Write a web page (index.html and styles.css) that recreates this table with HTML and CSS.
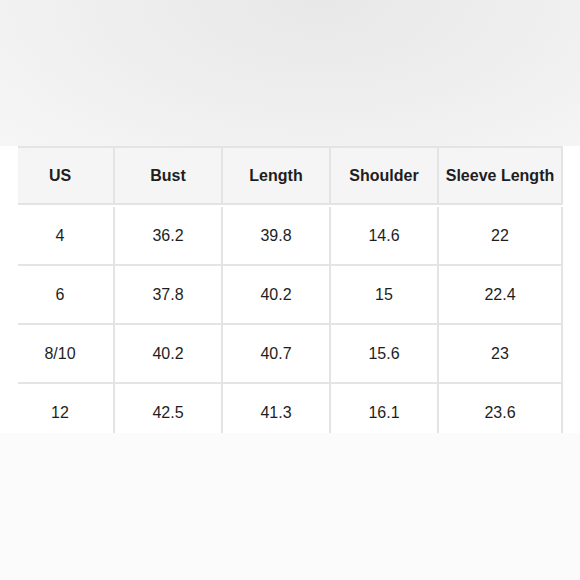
FILE: index.html
```html
<!DOCTYPE html>
<html>
<head>
<meta charset="utf-8">
<link rel="stylesheet" href="styles.css">
</head>
<body>
<div class="page">
  <div class="top"></div>
  <div class="band">
    <div class="clip">
      <div class="grid">
        <div class="cell head">US</div>
        <div class="cell head">Bust</div>
        <div class="cell head">Length</div>
        <div class="cell head">Shoulder</div>
        <div class="cell head">Sleeve Length</div>

        <div class="cell">4</div>
        <div class="cell">36.2</div>
        <div class="cell">39.8</div>
        <div class="cell">14.6</div>
        <div class="cell">22</div>

        <div class="cell">6</div>
        <div class="cell">37.8</div>
        <div class="cell">40.2</div>
        <div class="cell">15</div>
        <div class="cell">22.4</div>

        <div class="cell">8/10</div>
        <div class="cell">40.2</div>
        <div class="cell">40.7</div>
        <div class="cell">15.6</div>
        <div class="cell">23</div>

        <div class="cell">12</div>
        <div class="cell">42.5</div>
        <div class="cell">41.3</div>
        <div class="cell">16.1</div>
        <div class="cell">23.6</div>
      </div>
    </div>
  </div>
  <div class="bottom"></div>
</div>
</body>
</html>
```
FILE: styles.css
```css
html, body {
  margin: 0;
  padding: 0;
  background: #fbfbfb;
}
.page {
  width: 580px;
  height: 580px;
  display: flex;
  flex-direction: column;
  font-family: "Liberation Sans", Arial, sans-serif;
  color: #1e1e1e;
}
.top {
  height: 146px;
  background: radial-gradient(ellipse 460px 230px at 55% 0%, #e8e8e8 0%, #eeeeee 45%, #f7f7f7 100%);
}
.band {
  height: 287px;
  background: #ffffff;
  padding-left: 18px;
}
.clip {
  width: 545px;
  height: 287px;
  overflow: hidden;
}
.grid {
  margin-left: -11px;
  display: grid;
  grid-template-columns: 108px 108px 108px 108px 124px;
  grid-auto-rows: 59px;
  border-top: 2px solid #e4e4e4;
  width: 556px;
}
.cell {
  box-sizing: border-box;
  display: flex;
  align-items: center;
  justify-content: center;
  border-right: 2px solid #e4e4e4;
  border-bottom: 2px solid #e4e4e4;
  font-size: 16px;
  background: #ffffff;
}
.head {
  background: #f5f5f5;
  font-weight: bold;
  height: 57px;
  align-self: start;
}
.bottom {
  flex: 1;
  background: #fbfbfb;
}
```
